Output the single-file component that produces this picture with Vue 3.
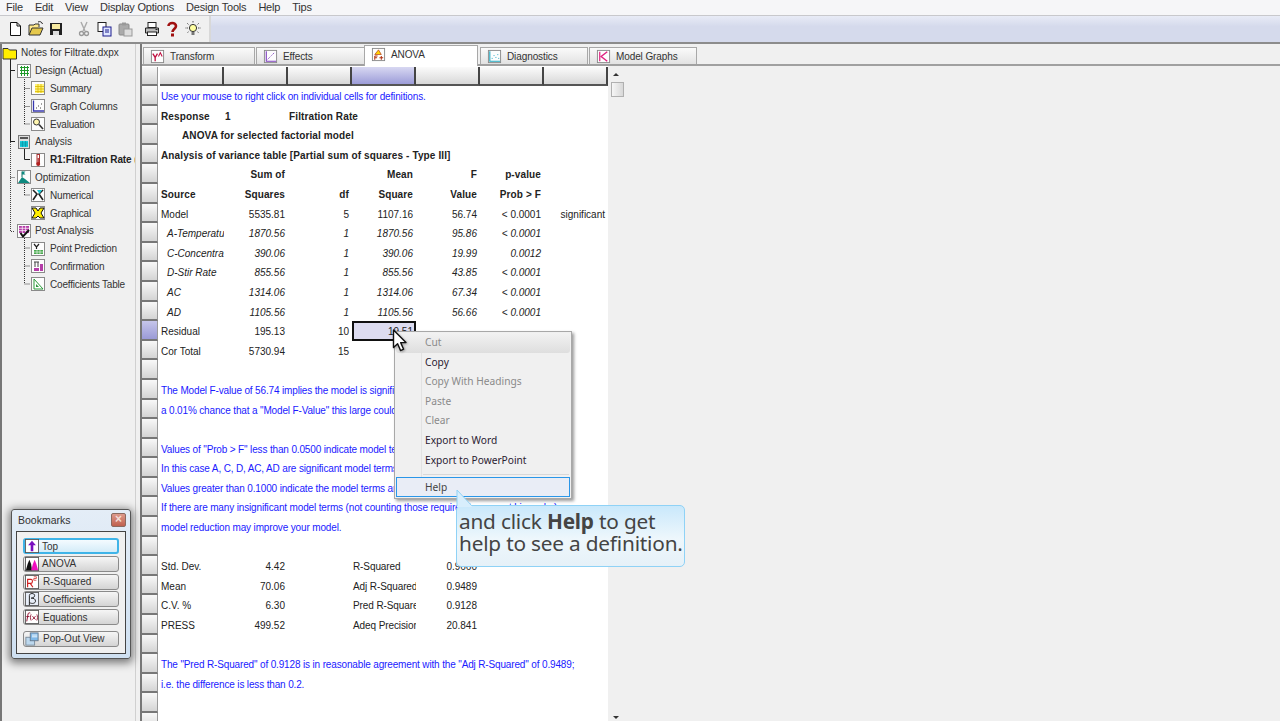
<template>
  <div class="app">
    <div class="menubar">
      <span v-for="m in menus" :key="m">{{ m }}</span>
    </div>

    <div class="toolbar">
      <div class="tools">
        <span v-for="t in tools" :key="t.icon" class="tool" :style="{ marginLeft: t.gap + 'px' }">
          <svg viewBox="0 0 16 16" v-html="icons[t.icon]"></svg>
        </span>
      </div>
      <div class="toolbar-fill"></div>
    </div>

    <div class="main">
      <aside class="tree">
        <svg class="tree-lines" width="136" height="260" viewBox="0 0 136 260">
          <path d="M10.5 12V98M10.5 26.5H15M10.5 97.5H15" stroke="#222" fill="none" />
          <path d="M10.5 98V187.5H15M10.5 133.5H15" stroke="#444" stroke-dasharray="1 1" fill="none" />
          <path d="M24.5 33V80M24.5 44.5H30M24.5 62.5H30M24.5 80H30M24.5 140V151M24.5 151H30M24.5 186V240M24.5 204H30M24.5 222H30M24.5 240H30" stroke="#333" stroke-dasharray="1 1" fill="none" />
          <path d="M24.5 104V115.5H30" stroke="#222" fill="none" />
        </svg>
        <div
          v-for="n in treeNodes"
          :key="n.label"
          class="node"
          :class="['level' + n.level, { current: n.current }]"
        >
          <svg class="node-icon" viewBox="0 0 16 16" v-html="icons[n.icon]"></svg>
          <span>{{ n.label }}</span>
        </div>
      </aside>

      <section class="content">
        <div class="tabs">
          <div
            v-for="t in tabs"
            :key="t.label"
            class="tab"
            :class="{ active: t.active }"
            :style="{ width: t.width + 'px' }"
          >
            <svg class="tab-icon" viewBox="0 0 16 16" v-html="icons[t.icon]"></svg>
            <span>{{ t.label }}</span>
          </div>
        </div>

        <div class="sheet-area">
          <div class="sheet">
            <div class="row head-row">
              <div class="row-head corner"></div>
              <div
                v-for="c in 7"
                :key="c"
                class="col-head"
                :class="{ selected: c === 4 }"
              ></div>
            </div>
            <div v-for="(r, i) in rows" :key="i" class="row">
              <div class="row-head" :class="{ selected: r.active }"></div>
              <div v-if="r.text" class="text-cell" :class="r.cls">{{ r.text }}</div>
              <template v-else>
                <div
                  v-for="(c, j) in r.cells || emptyRow"
                  :key="j"
                  class="cell"
                  :class="[
                    r.cls,
                    leftCell(r, j) ? 'left' : 'right',
                    {
                      indent: r.indent && j === 0,
                      current: r.active && j === 3,
                      label: r.fit && j === 3,
                    },
                  ]"
                >
                  {{ c }}
                </div>
              </template>
            </div>
          </div>

          <div class="scrollbar">
            <span class="arrow up"></span>
            <span class="thumb"></span>
            <span class="arrow down"></span>
          </div>
        </div>
      </section>
    </div>

    <div class="bookmarks">
      <div class="bm-title">
        <span>Bookmarks</span>
        <span class="bm-close">×</span>
      </div>
      <div class="bm-body">
        <div
          v-for="b in bookmarks"
          :key="b.label"
          class="bm-btn"
          :class="{ focus: b.focus, popout: b.icon === 'popout', wide: b.wide }"
        >
          <svg viewBox="0 0 16 16" v-html="icons[b.icon]"></svg>
          <span>{{ b.label }}</span>
        </div>
      </div>
    </div>

    <div class="context-menu">
      <template v-for="m in contextItems" :key="m.label">
        <div v-if="m.sep" class="menu-sep"></div>
        <div class="menu-item" :class="{ off: m.off, hover: m.hover, focus: m.focus }">
          {{ m.label }}
        </div>
      </template>
    </div>

    <svg class="cursor" width="17" height="24" viewBox="0 0 17 24">
      <path
        d="M1.5 1V18.5L5.6 14.8L8.6 21.6L11.6 20.2L8.7 13.6H14Z"
        fill="#fff"
        stroke="#111"
        stroke-width="1.4"
        stroke-linejoin="round"
      />
    </svg>

    <div class="callout">
      <svg class="callout-tip" width="18" height="18" viewBox="0 0 18 18">
        <path d="M1 17V1L16 17" fill="#d8eefc" stroke="#8fd2f6" />
        <path d="M1.7 18H16V16.8H1.7Z" fill="#d8eefc" />
      </svg>
      and click <b>Help</b> to get<br />
      help to see a definition.
    </div>
  </div>
</template>

<script setup>
const menus = ["File", "Edit", "View", "Display Options", "Design Tools", "Help", "Tips"];

const tools = [
  { icon: "new", gap: 0 },
  { icon: "open", gap: 5 },
  { icon: "save", gap: 4 },
  { icon: "cut", gap: 12 },
  { icon: "copy", gap: 4 },
  { icon: "paste", gap: 5 },
  { icon: "print", gap: 11 },
  { icon: "help", gap: 4 },
  { icon: "bulb", gap: 5 },
];

const treeNodes = [
  { label: "Notes for Filtrate.dxpx", icon: "folder", level: 0 },
  { label: "Design (Actual)", icon: "design", level: 1 },
  { label: "Summary", icon: "summary", level: 2 },
  { label: "Graph Columns", icon: "graphcol", level: 2 },
  { label: "Evaluation", icon: "evaluation", level: 2 },
  { label: "Analysis", icon: "analysis", level: 1 },
  { label: "R1:Filtration Rate (", icon: "response", level: 2, current: true },
  { label: "Optimization", icon: "optimization", level: 1 },
  { label: "Numerical", icon: "numerical", level: 2 },
  { label: "Graphical", icon: "graphical", level: 2 },
  { label: "Post Analysis", icon: "post", level: 1 },
  { label: "Point Prediction", icon: "point", level: 2 },
  { label: "Confirmation", icon: "confirm", level: 2 },
  { label: "Coefficients Table", icon: "coef", level: 2 },
];

const tabs = [
  { label: "Transform", icon: "transform", width: 112 },
  { label: "Effects", icon: "effects", width: 109 },
  { label: "ANOVA", icon: "anova", width: 114, active: true },
  { label: "Diagnostics", icon: "diagnostics", width: 108 },
  { label: "Model Graphs", icon: "modelgraphs", width: 108 },
];

const emptyRow = ["", "", "", "", "", "", ""];

const leftCell = (r, j) => j === 0 || r.response || (r.fit && j === 3);

const rows = [
  { text: "Use your mouse to right click on individual cells for definitions.", cls: "blue" },
  { cells: ["Response", "1", "Filtration Rate", "", "", "", ""], cls: "bold spill", response: true },
  { text: "ANOVA for selected factorial model", cls: "bold anova-title" },
  { text: "Analysis of variance table [Partial sum of squares - Type III]", cls: "bold" },
  { cells: ["", "Sum of", "", "Mean", "F", "p-value", ""], cls: "bold" },
  { cells: ["Source", "Squares", "df", "Square", "Value", "Prob > F", ""], cls: "bold" },
  { cells: ["Model", "5535.81", "5", "1107.16", "56.74", "< 0.0001", "significant"] },
  { cells: ["A-Temperatu", "1870.56", "1", "1870.56", "95.86", "< 0.0001", ""], cls: "ital", indent: true },
  { cells: ["C-Concentra", "390.06", "1", "390.06", "19.99", "0.0012", ""], cls: "ital", indent: true },
  { cells: ["D-Stir Rate", "855.56", "1", "855.56", "43.85", "< 0.0001", ""], cls: "ital", indent: true },
  { cells: ["AC", "1314.06", "1", "1314.06", "67.34", "< 0.0001", ""], cls: "ital", indent: true },
  { cells: ["AD", "1105.56", "1", "1105.56", "56.66", "< 0.0001", ""], cls: "ital", indent: true },
  { cells: ["Residual", "195.13", "10", "19.51", "", "", ""], active: true },
  { cells: ["Cor Total", "5730.94", "15", "", "", "", ""] },
  {},
  { text: "The Model F-value of 56.74 implies the model is significant.  There is only", cls: "blue" },
  { text: "a 0.01% chance that a \"Model F-Value\" this large could occur due to noise.", cls: "blue" },
  {},
  { text: "Values of \"Prob > F\" less than 0.0500 indicate model terms are significant.", cls: "blue" },
  { text: "In this case A, C, D, AC, AD are significant model terms.", cls: "blue" },
  { text: "Values greater than 0.1000 indicate the model terms are not significant.", cls: "blue" },
  { text: "If there are many insignificant model terms (not counting those required to support hierarchy),", cls: "blue" },
  { text: "model reduction may improve your model.", cls: "blue" },
  {},
  { cells: ["Std. Dev.", "4.42", "", "R-Squared", "0.9660", "", ""], fit: true },
  { cells: ["Mean", "70.06", "", "Adj R-Squared", "0.9489", "", ""], fit: true },
  { cells: ["C.V. %", "6.30", "", "Pred R-Squared", "0.9128", "", ""], fit: true },
  { cells: ["PRESS", "499.52", "", "Adeq Precision", "20.841", "", ""], fit: true },
  {},
  { text: "The \"Pred R-Squared\" of 0.9128 is in reasonable agreement with the \"Adj R-Squared\" of 0.9489;", cls: "blue" },
  { text: "i.e. the difference is less than 0.2.", cls: "blue" },
  {},
  {},
];

const bookmarks = [
  { label: "Top", icon: "bmTop", focus: true },
  { label: "ANOVA", icon: "bmAnova" },
  { label: "R-Squared", icon: "bmR2", wide: true },
  { label: "Coefficients", icon: "bmBeta", wide: true },
  { label: "Equations", icon: "bmFx", wide: true },
  { label: "Pop-Out View", icon: "popout", wide: true },
];

const contextItems = [
  { label: "Cut", off: true, hover: true },
  { label: "Copy" },
  { label: "Copy With Headings", off: true },
  { label: "Paste", off: true },
  { label: "Clear", off: true },
  { label: "Export to Word" },
  { label: "Export to PowerPoint" },
  { label: "Help", sep: true, focus: true },
];

const frame = '<rect x="1.5" y="1.5" width="13" height="13" fill="#fdfdfd" stroke="#8a8a8a"/>';

const icons = {
  new: '<path d="M3.5 1.5H10L13.5 5V14.5H3.5Z" fill="#fff" stroke="#111"/><path d="M10 1.5V5H13.5" fill="none" stroke="#111"/>',
  open: '<path d="M1 14V4H6L7 3H11V6" fill="#ffe98a" stroke="#333"/><path d="M1 14L4 7H15L12 14Z" fill="#e5c84b" stroke="#333"/><path d="M10 1C12 0 14 1 14.5 3" fill="none" stroke="#222"/>',
  save: '<rect x="2" y="2" width="12" height="12" fill="#222"/><rect x="4" y="3" width="8" height="5" fill="#f6e9a0"/><rect x="5" y="10" width="6" height="4" fill="#ddd"/>',
  cut: '<path d="M5 1L9 10M11 1L7 10" stroke="#aaa" stroke-width="1.4" fill="none"/><circle cx="5.5" cy="12.5" r="2" fill="none" stroke="#999" stroke-width="1.3"/><circle cx="10.5" cy="12.5" r="2" fill="none" stroke="#999" stroke-width="1.3"/>',
  copy: '<rect x="2" y="1.5" width="8" height="9" fill="#fff" stroke="#222"/><rect x="7" y="6" width="8" height="9" fill="#dfe6ff" stroke="#1a1a8c"/><path d="M9 9H13M9 11H13" stroke="#1a1a8c"/>',
  paste: '<rect x="2" y="3" width="10" height="11" rx="1" fill="#aaa" stroke="#8a8a8a"/><rect x="5" y="1.5" width="4" height="3" fill="#999"/><rect x="7" y="8" width="8" height="7" fill="#ddd" stroke="#999"/>',
  print: '<rect x="4" y="1.5" width="8" height="5" fill="#fff" stroke="#222"/><path d="M1.5 7H14.5V12H1.5Z" fill="#bbb" stroke="#222"/><rect x="3.5" y="11" width="9" height="3.5" fill="#fff" stroke="#222"/><rect x="11.5" y="8" width="2" height="1" fill="#222"/>',
  help: '<path d="M4.5 5C4.5 1 12 1 12 5C12 8 8.5 8 8.5 11" fill="none" stroke="#a01010" stroke-width="2.6"/><rect x="7" y="12.5" width="3" height="3" fill="#a01010"/>',
  bulb: '<circle cx="8" cy="7" r="3.6" fill="#ffffa0" stroke="#333"/><rect x="6.5" y="11" width="3" height="3" fill="#777"/><path d="M8 0V2M2 2L3.5 3.5M14 2L12.5 3.5M0.5 7H3M13 7H15.5M2.5 11.5L4 10.5M13.5 11.5L12 10.5" stroke="#555" stroke-dasharray="1 .5"/>',
  folder: '<path d="M1 3.5H6L7.5 5H14.5V14H1Z" fill="#ffee00" stroke="#333"/>',
  design: frame + '<path d="M4 4.5H13M4 7.5H13M4 10.5H13M5.5 3V13M8.5 3V13M11.5 3V13" stroke="#1f9a2a"/>',
  summary: frame + '<rect x="5" y="4" width="9" height="9" fill="#fff27a"/><path d="M5 6.5H14M5 9H14M5 11.5H14M8 4V13M11 4V13" stroke="#d9b900" stroke-width=".8"/>',
  graphcol: frame + '<path d="M3.5 2.5V13H14" fill="none" stroke="#3838b0" stroke-width="1.3"/><path d="M6 10H7M8 8H9M10 10H11M11 6H12" stroke="#444"/>',
  evaluation: frame + '<circle cx="6.5" cy="6" r="3" fill="#fff6b0" stroke="#333"/><path d="M9 8.5L13 13" stroke="#333" stroke-width="1.6"/>',
  analysis: '<rect x="2.5" y="1.5" width="11" height="13" fill="#ddd" stroke="#777"/><rect x="4" y="3" width="8" height="2" fill="#555"/><path d="M4 7H12V13H4Z" fill="#18d0e0"/><path d="M4 9H12M4 11H12M6.5 7V13M9.5 7V13" stroke="#0a8a9a" stroke-width=".6"/>',
  response: frame + '<rect x="7" y="2.5" width="2.5" height="9" fill="#fff" stroke="#a33"/><circle cx="8.2" cy="12" r="2" fill="#b02020"/><path d="M8.2 6V11" stroke="#b02020" stroke-width="1.2"/>',
  optimization: frame + '<path d="M2 14L6 8L9 10L14 14Z" fill="#0f8a80"/><path d="M6 8V2.5" stroke="#0f6a60"/><path d="M6 2.5H9.5L8 4L9.5 5.5H6Z" fill="#0f8a80"/>',
  numerical: frame + '<path d="M3 3L7 7L3 13M13 3L9 7L13 13" fill="none" stroke="#222" stroke-width="1.6"/><path d="M7 3H12L9.5 7Z" fill="#19c8d8"/>',
  graphical: frame + '<path d="M2 3H6L8 6L10 3H14L11 8L14 13H10L8 11L6 13H2L5 8Z" fill="#ffee00" stroke="#111"/>',
  post: frame + '<path d="M3 3H13V10H3Z" fill="#b53da8"/><path d="M3 5.3H13M3 7.6H13M6.3 3V10M9.6 3V10" stroke="#fff" stroke-width=".7"/><path d="M4.5 10L7 13.5L13 7" fill="none" stroke="#111" stroke-width="2"/>',
  point: frame + '<path d="M4 3L6.5 6L9 3M6.5 6V8" fill="none" stroke="#222" stroke-width="1.2"/><path d="M4 9H13V13H4Z" fill="#49a94f"/><path d="M4 11H13M7 9V13M10 9V13" stroke="#fff" stroke-width=".6"/>',
  confirm: frame + '<path d="M4 4H9M5 4V9M8 4V9" stroke="#444" fill="none"/><path d="M10 6H13V13H10ZM4 10H9V13H4Z" fill="#b53da8"/>',
  coef: frame + '<path d="M4 3V13H13Z" fill="#fff" stroke="#2a9a3a"/><path d="M6 8V11H9Z" fill="#2a9a3a"/>',
  transform: frame + '<path d="M3 5L5.5 9L8 5M5.5 9V13" fill="none" stroke="#c01040" stroke-width="1.4"/><path d="M9 8L11 4L13 8" fill="none" stroke="#c01040" stroke-width="1.1"/>',
  effects: frame + '<path d="M3.5 2.5V13H14" fill="none" stroke="#8040c0" stroke-width="1.2"/><path d="M5 11L8 8M9 7L12 4" stroke="#8040c0" stroke-dasharray="1.5 1"/>',
  anova: frame + '<path d="M4 8L8 3L11 8Z" fill="#ffd400" stroke="#b03010" stroke-width=".7"/><path d="M4 9.5V13.5M4 9.5H7M4 11.5H6.5M9 11.5H13M11 9.5V13.5" fill="none" stroke="#b03010" stroke-width="1.1"/>',
  diagnostics: frame + '<path d="M3 2.5V13H14" fill="none" stroke="#20a8c0" stroke-width="1.2"/><path d="M5 10H6M7 7H8M9 9H10M11 6H12M12 10H13" stroke="#20a8c0"/>',
  modelgraphs: frame + '<path d="M4 3V13" stroke="#e02080" stroke-width="1.3"/><path d="M12 3L5.5 8L12 13" fill="none" stroke="#e02080" stroke-width="1.5"/>',
  bmTop: '<rect x=".5" y=".5" width="15" height="15" fill="#fff" stroke="#555"/><path d="M8 2L12.5 7H9.5V14H6.5V7H3.5Z" fill="#7a0fc0"/>',
  bmAnova: '<rect x=".5" y=".5" width="15" height="15" fill="#fff" stroke="#555"/><path d="M1 15L3 8L5 3L7 8L8 15Z" fill="#111"/><path d="M7 15L9 8L11 3L13 8L15 15Z" fill="#f010c0"/>',
  bmR2: '<rect x=".5" y=".5" width="15" height="15" fill="#fff" stroke="#555"/><path d="M3 14V5H7C9 5 9 9.5 7 9.5H3M6 9.5L9 14" fill="none" stroke="#d02020" stroke-width="1.3"/><path d="M10 2H13V4H10V6H13" fill="none" stroke="#d02020" stroke-width=".8"/>',
  bmBeta: '<rect x=".5" y=".5" width="15" height="15" fill="#e8eef8" stroke="#555"/><path d="M5 15V4C5 1 11 1 11 4C11 6.5 8 7 7 7C10 7 12 8 12 10.5C12 13 8 14 5 12" fill="none" stroke="#222" stroke-width="1.1"/>',
  bmFx: '<rect x=".5" y=".5" width="15" height="15" fill="#fff" stroke="#555"/><path d="M2 13L3.5 4.5C4 3 5 3 6 3.5M1.5 7.5H5" fill="none" stroke="#901030" stroke-width="1.1"/><path d="M7 5C6 7 6 10 7 12M13.5 5C14.5 7 14.5 10 13.5 12M8.5 7L12 11M12 7L8.5 11" fill="none" stroke="#901030"/>',
  popout: '<rect x="1" y="6" width="10" height="9" fill="#bcd8ee" stroke="#789"/><rect x="6" y="1" width="9" height="9" fill="#7fb8e8" stroke="#678"/><path d="M8 3.5H14M8 5.5H14" stroke="#fff"/>',
};
</script>

<style>
html,
body {
  margin: 0;
  background: #f0f0f0;
}
</style>

<style scoped>
.app {
  position: relative;
  width: 1280px;
  height: 721px;
  overflow: hidden;
  background: #f0f0f0;
  color: #222;
  font-family: "Liberation Sans", Arial, sans-serif;
  font-size: 10px;
  display: flex;
  flex-direction: column;
}

.menubar {
  height: 14px;
  padding: 0 0 1px 6px;
  display: flex;
  gap: 12px;
  align-items: center;
  background: #f6f6f8;
  border-bottom: 1px solid #c8c8cc;
  font-size: 11px;
  letter-spacing: -0.2px;
  color: #333;
}

.toolbar {
  height: 26px;
  display: flex;
  border-bottom: 2px solid #8c8c8c;
}

.tools {
  width: 202px;
  padding-left: 7px;
  display: flex;
  align-items: center;
  border-right: 2px solid #d8d8d8;
}

.tool {
  width: 16px;
  height: 16px;
  display: block;
}

.tool svg {
  display: block;
  width: 16px;
  height: 16px;
}

.toolbar-fill {
  flex: 1;
  background: linear-gradient(#e8ebf6, #d5daec 40%);
}

.main {
  flex: 1;
  display: flex;
  min-height: 0;
}

.tree {
  position: relative;
  width: 133px;
  border-left: 2px solid #777;
  flex-shrink: 0;
  border-right: 1px solid #d0d0d0;
  margin-right: 4px;
}

.tree-lines {
  position: absolute;
  left: -2px;
  top: 0;
}

.node {
  position: relative;
  height: 17.8px;
  display: flex;
  align-items: center;
  gap: 3px;
  color: #333;
  white-space: nowrap;
  overflow: hidden;
}

.level1 {
  padding-left: 14px;
  letter-spacing: -0.05px;
}

.level2 {
  padding-left: 28px;
  letter-spacing: -0.2px;
}

.level2 .node-icon {
  margin-right: 1px;
}

.node.current {
  font-weight: bold;
  color: #222;
  letter-spacing: -0.1px;
}

.node-icon {
  width: 16px;
  height: 16px;
  flex-shrink: 0;
}

.content {
  flex: 1;
  border-left: 2px solid #777;
  min-width: 0;
}

.tabs {
  height: 20px;
  display: flex;
  align-items: flex-end;
  padding-left: 1px;
  border-bottom: 2px solid #a0a0a0;
}

.tab {
  height: 17px;
  margin-right: 1px;
  display: flex;
  align-items: center;
  gap: 5px;
  padding-left: 6px;
  box-sizing: border-box;
  background: linear-gradient(#fafafa, #e2e2e2);
  border: 1px solid #a8a8a8;
  border-bottom: 0;
  color: #333;
  letter-spacing: -0.1px;
}

.tab.active {
  position: relative;
  height: 21px;
  margin-bottom: -2px;
  margin-left: -2px;
  margin-right: 2px;
  background: #fff;
  padding-bottom: 3px;
}

.tab-icon {
  width: 15px;
  height: 15px;
  flex-shrink: 0;
}

.sheet-area {
  display: flex;
  height: 655px;
}

.sheet {
  width: 466px;
  background: #fff;
  overflow: hidden;
  flex-shrink: 0;
}

.row {
  display: flex;
  height: 19.6px;
  white-space: nowrap;
}

.head-row {
  height: 20px;
  padding-top: 1px;
  box-sizing: border-box;
}

.row-head {
  width: 16px;
  margin-right: 2px;
  flex-shrink: 0;
  box-sizing: border-box;
  background: linear-gradient(#f8f8f8, #d4d4d4);
  border-bottom: 2px solid #777;
  border-right: 1px solid #999;
}

.row-head.selected {
  background: linear-gradient(#c6c6ea, #9a9ad6);
}

.col-head {
  width: 64px;
  flex-shrink: 0;
  box-sizing: border-box;
  background: linear-gradient(#fbfbfb, #d8d8d8);
  border-bottom: 2px solid #555;
  border-right: 2px solid #444;
}

.col-head.selected {
  background: linear-gradient(#d8d8f2, #9c9cd8);
}

.text-cell {
  padding-left: 1px;
  line-height: 21.6px;
}

.cell {
  width: 64px;
  flex-shrink: 0;
  box-sizing: border-box;
  line-height: 21.6px;
  overflow: hidden;
  padding: 0 3px 0 1px;
}

.cell.right {
  text-align: right;
}

.cell.indent {
  padding-left: 7px;
}

.cell.label {
  letter-spacing: -0.1px;
}

.cell.current {
  background: #dddcf0;
  border: 2px solid #111;
  padding-right: 1px;
  line-height: 17px;
}

.cell.spill {
  overflow: visible;
}

.blue {
  color: #1a1aff;
  letter-spacing: -0.15px;
}

.bold {
  font-weight: bold;
  letter-spacing: 0.12px;
}

.ital {
  font-style: italic;
}

.anova-title {
  padding-left: 22px;
}

.scrollbar {
  position: relative;
  width: 14px;
  margin-left: 2px;
  background: #f0f0f0;
}

.thumb {
  position: absolute;
  left: 1px;
  top: 16px;
  width: 11px;
  height: 13px;
  background: linear-gradient(90deg, #f6f6f6, #d8d8d8);
  border: 1px solid #b0b0b0;
}

.arrow {
  position: absolute;
  left: 3px;
  width: 0;
  height: 0;
  border-left: 3px solid transparent;
  border-right: 3px solid transparent;
}

.arrow.up {
  top: 7px;
  border-bottom: 3px solid #333;
}

.arrow.down {
  bottom: 2px;
  border-top: 3px solid #333;
}

.bookmarks {
  position: absolute;
  left: 11px;
  top: 509px;
  width: 120px;
  height: 150px;
  box-sizing: border-box;
  padding: 0 4px 4px;
  background: linear-gradient(#e4edf7, #cfe0f1);
  border: 1px solid #555;
  border-radius: 3px;
  box-shadow: 0 2px 8px 2px rgba(0, 0, 0, 0.5);
  display: flex;
  flex-direction: column;
}

.bm-title {
  height: 21px;
  box-sizing: border-box;
  flex-shrink: 0;
  display: flex;
  align-items: center;
  justify-content: space-between;
  padding: 0 0 2px 2px;
  font-size: 10.5px;
  color: #333;
}

.bm-close {
  width: 15px;
  height: 14px;
  margin-top: 1px;
  background: linear-gradient(#dd9a8c, #c0604e);
  border: 1px solid #8a6a60;
  border-radius: 2px;
  box-sizing: border-box;
  color: #f4dcd6;
  text-align: center;
  line-height: 11px;
  font-size: 12px;
  font-weight: bold;
}

.bm-body {
  flex: 1;
  background: #f0f0f0;
  border: 1px solid #444;
  padding: 6px 6px 0;
  display: flex;
  flex-direction: column;
  gap: 1.8px;
}

.bm-btn {
  height: 16px;
  flex-shrink: 0;
  display: flex;
  align-items: center;
  gap: 3px;
  box-sizing: border-box;
  padding-left: 1px;
  background: linear-gradient(#f6f6f6, #d4d4d4);
  border: 1px solid #8a8a8a;
  border-radius: 3px;
  color: #333;
}

.bm-btn svg {
  width: 14px;
  height: 14px;
  flex-shrink: 0;
}

.bm-btn.wide svg {
  margin-right: 1px;
}

.bm-btn.focus {
  border: 2px solid #3fb4e8;
  background: linear-gradient(#f4fbff, #d4ecf8);
  padding-left: 0;
}

.bm-btn.popout {
  margin-top: 4px;
}

.context-menu {
  position: absolute;
  left: 394px;
  top: 331px;
  width: 178px;
  height: 168px;
  box-sizing: border-box;
  padding: 1px;
  background: #f0f0f0;
  border: 1px solid #a8a8a8;
  box-shadow: 2px 2px 3px rgba(0, 0, 0, 0.4);
  font-family: "Noto Sans", "Open Sans", sans-serif;
  font-size: 10.2px;
  color: #2a2030;
}

.context-menu::before {
  content: "";
  position: absolute;
  left: 26px;
  top: 2px;
  bottom: 2px;
  border-left: 1px solid #e2e2e2;
}

.menu-item {
  position: relative;
  height: 19.6px;
  line-height: 19.6px;
  padding-left: 29px;
  box-sizing: border-box;
}

.menu-item.off {
  color: #8a8a8a;
}

.menu-item.hover {
  background: linear-gradient(#f2f2f2, #dedede);
  border-radius: 3px;
}

.menu-item.focus {
  height: 20px;
  line-height: 18px;
  padding-left: 28px;
  background: #e9edf6;
  border: 1px solid #2a96e8;
  color: #444;
}

.menu-sep {
  height: 1px;
  margin: 4px 1px 2px 27px;
  background: #d8d8d8;
}

.cursor {
  position: absolute;
  left: 392px;
  top: 329px;
  filter: drop-shadow(1px 1px 1px rgba(0, 0, 0, 0.3));
}

.callout {
  position: absolute;
  left: 456px;
  top: 505px;
  width: 229px;
  height: 62px;
  box-sizing: border-box;
  padding: 4px 0 0 2px;
  border: 1px solid #8fd2f6;
  border-radius: 5px;
  background: linear-gradient(#c9e8fb, #eef7fc 55%, #e6f1f8);
  font-family: "Noto Sans", "Open Sans", sans-serif;
  font-size: 20.8px;
  line-height: 22px;
  color: #444;
  letter-spacing: -0.2px;
}

.callout-tip {
  position: absolute;
  left: -1px;
  top: -17px;
}
</style>
